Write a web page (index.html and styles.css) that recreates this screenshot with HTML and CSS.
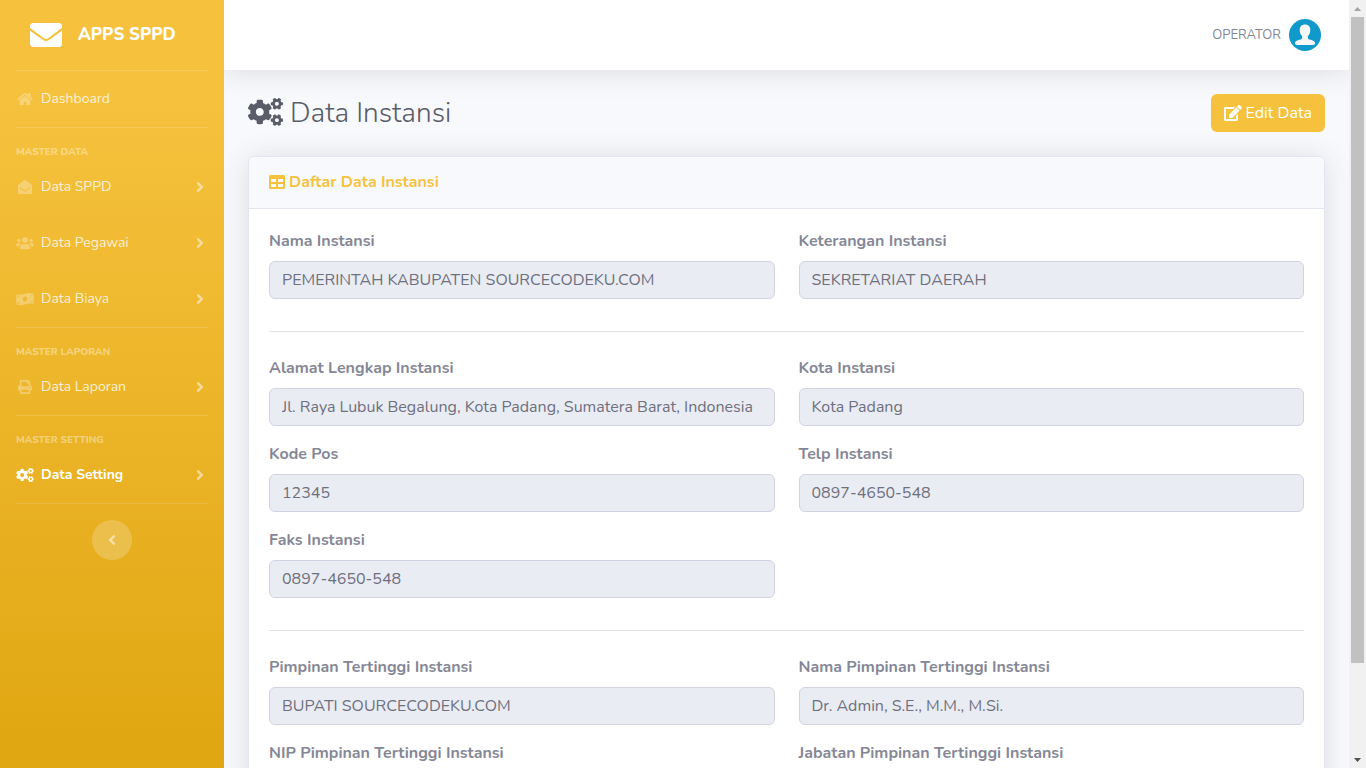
FILE: index.html
```html
<!DOCTYPE html>
<html lang="id">
<head>
<meta charset="utf-8">
<meta name="viewport" content="width=device-width, initial-scale=1">
<title>Data Instansi</title>
<link rel="stylesheet" href="styles.css">
</head>
<body>
<svg class="sprite" aria-hidden="true">
  <symbol id="envelope" viewBox="0 0 512 512"><path d="M502.3 190.8c3.9-3.1 9.7-.2 9.7 4.7V400c0 26.5-21.5 48-48 48H48c-26.5 0-48-21.5-48-48V195.6c0-5 5.7-7.8 9.7-4.7 22.4 17.4 52.1 39.5 154.1 113.6 21.1 15.4 56.7 47.8 92.2 47.6 35.7.3 72-32.8 92.3-47.6 102-74.1 131.6-96.3 154-113.7zM256 320c23.2.4 56.6-29.2 73.4-41.4 132.7-96.3 142.8-104.7 173.4-128.7 5.8-4.5 9.2-11.5 9.2-18.9v-19c0-26.5-21.5-48-48-48H48c-26.5 0-48 21.5-48 48v19c0 7.4 3.4 14.3 9.2 18.9 30.6 23.9 40.7 32.4 173.4 128.7 16.8 12.2 50.2 41.8 73.4 41.4z"/></symbol>
  <symbol id="home" viewBox="0 0 576 512"><path d="M280.37 148.26L96 300.11V464a16 16 0 0 0 16 16l112.06-.29a16 16 0 0 0 15.92-16V368a16 16 0 0 1 16-16h64a16 16 0 0 1 16 16v95.64a16 16 0 0 0 16 16.05L464 480a16 16 0 0 0 16-16V300L295.67 148.26a12.19 12.19 0 0 0-15.3 0zM571.6 251.47L488 182.56V44.05a12 12 0 0 0-12-12h-56a12 12 0 0 0-12 12v72.61L318.47 43a48 48 0 0 0-61 0L4.34 251.47a12 12 0 0 0-1.6 16.9l25.5 31A12 12 0 0 0 45.15 301l235.22-193.74a12.19 12.19 0 0 1 15.3 0L530.9 301a12 12 0 0 0 16.9-1.6l25.5-31a12 12 0 0 0-1.7-16.93z"/></symbol>
  <symbol id="envelope-open" viewBox="0 0 512 512"><path d="M512 464c0 26.51-21.49 48-48 48H48c-26.51 0-48-21.49-48-48V200.724a48 48 0 0 1 18.387-37.776c24.913-19.529 45.501-35.365 164.2-121.511C199.412 29.17 232.797-.347 256 .003c23.198-.354 56.596 29.172 73.413 41.433 118.687 86.137 139.303 101.995 164.2 121.512A48 48 0 0 1 512 200.724V464zm-65.666-196.605c-2.563-3.728-7.7-4.595-11.339-1.907-22.845 16.873-55.462 40.705-105.582 77.079-16.825 12.266-50.21 41.781-73.413 41.43-23.211.344-56.559-29.143-73.413-41.43-50.114-36.37-82.734-60.204-105.582-77.079-3.639-2.688-8.776-1.821-11.339 1.907l-9.072 13.196a7.998 7.998 0 0 0 1.839 10.967c22.887 16.899 55.454 40.69 105.303 76.868 20.274 14.781 56.524 47.813 92.264 47.573 35.724.242 71.961-32.771 92.263-47.573 49.85-36.179 82.418-59.97 105.303-76.868a7.998 7.998 0 0 0 1.839-10.967l-9.071-13.196z"/></symbol>
  <symbol id="users" viewBox="0 0 640 512"><path d="M96 224c35.3 0 64-28.7 64-64s-28.7-64-64-64-64 28.7-64 64 28.7 64 64 64zm448 0c35.3 0 64-28.7 64-64s-28.7-64-64-64-64 28.7-64 64 28.7 64 64 64zm32 32h-64c-17.6 0-33.5 7.1-45.1 18.6 40.3 22.1 68.9 62 75.1 109.4h66c17.7 0 32-14.3 32-32v-32c0-35.3-28.7-64-64-64zm-256 0c61.9 0 112-50.1 112-112S381.9 32 320 32 208 82.1 208 144s50.1 112 112 112zm76.8 32h-8.3c-20.8 10-43.9 16-68.5 16s-47.6-6-68.5-16h-8.3C179.6 288 128 339.6 128 403.2V432c0 26.5 21.5 48 48 48h288c26.5 0 48-21.5 48-48v-28.8c0-63.6-51.6-115.2-115.2-115.2zm-223.7-13.4C161.5 263.1 145.6 256 128 256H64c-35.3 0-64 28.7-64 64v32c0 17.7 14.3 32 32 32h65.9c6.3-47.4 34.9-87.3 75.2-109.4z"/></symbol>
  <symbol id="money" viewBox="0 0 640 512"><path d="M621.16 54.46C582.37 38.19 543.55 32 504.75 32c-123.17-.01-246.33 62.34-369.5 62.34-30.89 0-61.76-3.92-92.65-13.72-3.47-1.1-6.95-1.62-10.35-1.62C15.04 79 0 92.32 0 110.81v317.26c0 12.63 7.23 24.6 18.84 29.46C57.63 473.81 96.45 480 135.25 480c123.17 0 246.34-62.35 369.51-62.35 30.89 0 61.76 3.92 92.65 13.72 3.47 1.1 6.95 1.62 10.35 1.62 17.21 0 32.25-13.32 32.25-31.81V83.93c-.01-12.64-7.24-24.6-18.85-29.47zM48 132.22c20.12 5.04 41.12 7.57 62.72 8.93C104.84 170.54 79 192.69 48 192.69v-60.47zm0 285v-47.78c34.37 0 62.18 27.27 63.71 61.4-22.53-1.81-43.59-6.31-63.71-13.62zM320 352c-44.19 0-80-42.99-80-96 0-53.02 35.82-96 80-96s80 42.98 80 96c0 53.03-35.83 96-80 96zm272 27.78c-17.52-4.39-35.71-6.85-54.32-8.44 5.87-26.08 27.5-45.88 54.32-49.28v57.72zm0-236.11c-30.89-3.91-54.86-29.7-55.81-61.55 19.54 2.17 38.09 6.23 55.81 12.66v48.89z"/></symbol>
  <symbol id="print" viewBox="0 0 512 512"><path d="M448 192V77.25c0-8.49-3.37-16.62-9.37-22.63L393.37 9.37c-6-6-14.14-9.37-22.63-9.37H96C78.33 0 64 14.33 64 32v160c-35.35 0-64 28.65-64 64v112c0 8.84 7.16 16 16 16h48v96c0 17.67 14.33 32 32 32h320c17.67 0 32-14.33 32-32v-96h48c8.84 0 16-7.16 16-16V256c0-35.35-28.65-64-64-64zm-64 256H128v-96h256v96zm0-224H128V64h192v48c0 8.84 7.16 16 16 16h48v96zm48 72c-13.25 0-24-10.75-24-24 0-13.26 10.75-24 24-24s24 10.74 24 24c0 13.25-10.75 24-24 24z"/></symbol>
  <symbol id="cogs" viewBox="0 0 640 512"><path d="M512.1 191l-8.2 14.3c-3 5.3-9.4 7.5-15.1 5.4-11.8-4.4-22.6-10.7-32.1-18.6-4.6-3.8-5.8-10.5-2.8-15.7l8.2-14.3c-6.9-8-12.3-17.3-15.9-27.4h-16.5c-6 0-11.2-4.3-12.2-10.3-2-12-2.1-24.6 0-37.1 1-6 6.2-10.4 12.2-10.4h16.5c3.6-10.1 9-19.4 15.9-27.4l-8.2-14.3c-3-5.2-1.9-11.9 2.8-15.7 9.5-7.9 20.4-14.2 32.1-18.6 5.7-2.1 12.1.1 15.1 5.4l8.2 14.3c10.5-1.9 21.2-1.9 31.7 0L552 6.3c3-5.3 9.4-7.5 15.1-5.4 11.8 4.4 22.6 10.7 32.1 18.6 4.6 3.8 5.8 10.5 2.8 15.7l-8.2 14.3c6.9 8 12.3 17.3 15.9 27.4h16.5c6 0 11.2 4.3 12.2 10.3 2 12 2.1 24.6 0 37.1-1 6-6.2 10.4-12.2 10.4h-16.5c-3.6 10.1-9 19.4-15.9 27.4l8.2 14.3c3 5.2 1.9 11.9-2.8 15.7-9.5 7.9-20.4 14.2-32.1 18.6-5.7 2.1-12.1-.1-15.1-5.4l-8.2-14.3c-10.4 1.9-21.2 1.9-31.7 0zm-10.5-58.8c38.5 29.6 82.4-14.3 52.8-52.8-38.5-29.7-82.4 14.3-52.8 52.8zM386.3 286.1l33.7 16.8c10.1 5.8 14.5 18.1 10.5 29.1-8.9 24.2-26.4 46.4-42.6 65.8-7.4 8.9-20.2 11.1-30.3 5.3l-29.1-16.8c-16 13.7-34.6 24.6-54.9 31.7v33.6c0 11.6-8.3 21.6-19.7 23.6-24.6 4.2-50.4 4.4-75.9 0-11.5-2-20-11.9-20-23.6V418c-20.3-7.2-38.9-18-54.9-31.7L74 403c-10 5.8-22.9 3.6-30.3-5.3-16.2-19.4-33.3-41.6-42.2-65.7-4-10.9.4-23.2 10.5-29.1l33.3-16.8c-3.9-20.9-3.9-42.4 0-63.4L12 205.8c-10.1-5.8-14.6-18.1-10.5-29 8.9-24.2 26-46.4 42.2-65.8 7.4-8.9 20.2-11.1 30.3-5.3l29.1 16.8c16-13.7 34.6-24.6 54.9-31.7V57.1c0-11.5 8.2-21.5 19.6-23.5 24.6-4.2 50.5-4.4 76-.1 11.5 2 20 11.9 20 23.6v33.6c20.3 7.2 38.9 18 54.9 31.7l29.1-16.8c10-5.8 22.9-3.6 30.3 5.3 16.2 19.4 33.2 41.6 42.1 65.8 4 10.9.1 23.2-10 29.1l-33.7 16.8c3.9 21 3.9 42.5 0 63.5zm-117.6 21.1c59.2-77-28.7-164.9-105.7-105.7-59.2 77 28.7 164.9 105.7 105.7zm243.4 182.7l-8.2 14.3c-3 5.3-9.4 7.5-15.1 5.4-11.8-4.4-22.6-10.7-32.1-18.6-4.6-3.8-5.8-10.5-2.8-15.7l8.2-14.3c-6.9-8-12.3-17.3-15.9-27.4h-16.5c-6 0-11.2-4.3-12.2-10.3-2-12-2.1-24.6 0-37.1 1-6 6.2-10.4 12.2-10.4h16.5c3.6-10.1 9-19.4 15.9-27.4l-8.2-14.3c-3-5.2-1.9-11.9 2.8-15.7 9.5-7.9 20.4-14.2 32.1-18.6 5.7-2.1 12.1.1 15.1 5.4l8.2 14.3c10.5-1.9 21.2-1.9 31.7 0l8.2-14.3c3-5.3 9.4-7.5 15.1-5.4 11.8 4.4 22.6 10.7 32.1 18.6 4.6 3.8 5.8 10.5 2.8 15.7l-8.2 14.3c6.9 8 12.3 17.3 15.9 27.4h16.5c6 0 11.2 4.3 12.2 10.3 2 12 2.1 24.6 0 37.1-1 6-6.2 10.4-12.2 10.4h-16.5c-3.6 10.1-9 19.4-15.9 27.4l8.2 14.3c3 5.2 1.9 11.9-2.8 15.7-9.5 7.9-20.4 14.2-32.1 18.6-5.7 2.1-12.1-.1-15.1-5.4l-8.2-14.3c-10.4 1.9-21.2 1.9-31.7 0zM501.6 431c38.5 29.6 82.4-14.3 52.8-52.8-38.5-29.6-82.4 14.3-52.8 52.8z"/></symbol>
  <symbol id="angle" viewBox="0 0 256 512"><path d="M224.3 273l-136 136c-9.4 9.4-24.6 9.4-33.9 0l-22.6-22.6c-9.4-9.4-9.4-24.6 0-33.9l96.4-96.4-96.4-96.4c-9.4-9.4-9.4-24.6 0-33.9L54.3 103c9.4-9.4 24.6-9.4 33.9 0l136 136c9.5 9.4 9.5 24.6.1 34z"/></symbol>
  <symbol id="edit" viewBox="0 0 576 512"><path d="M402.6 83.2l90.2 90.2c3.8 3.8 3.8 10 0 13.8L274.4 405.6l-92.8 10.3c-12.4 1.4-22.9-9.1-21.5-21.5l10.3-92.8L388.8 83.2c3.8-3.8 10-3.8 13.8 0zm162-22.9l-48.8-48.8c-15.2-15.2-39.9-15.2-55.2 0l-35.4 35.4c-3.8 3.8-3.8 10 0 13.8l90.2 90.2c3.8 3.8 10 3.8 13.8 0l35.4-35.4c15.2-15.3 15.2-40 0-55.2zM384 346.2V448H64V128h229.8c3.2 0 6.2-1.3 8.5-3.5l40-40c7.6-7.6 2.2-20.5-8.5-20.5H48C21.5 64 0 85.5 0 112v352c0 26.5 21.5 48 48 48h352c26.5 0 48-21.5 48-48V306.2c0-10.7-12.9-16-20.5-8.5l-40 40c-2.2 2.3-3.5 5.3-3.5 8.5z"/></symbol>
  <symbol id="table" viewBox="0 0 512 512"><path d="M464 32H48C21.49 32 0 53.49 0 80v352c0 26.51 21.49 48 48 48h416c26.51 0 48-21.49 48-48V80c0-26.51-21.49-48-48-48zM224 416H64v-96h160v96zm0-160H64v-96h160v96zm224 160H288v-96h160v96zm0-160H288v-96h160v96z"/></symbol>
</svg>
<div class="window">
  <div class="page">
    <aside class="sidebar">
      <a class="brand" href="#"><svg class="brand-icon"><use href="#envelope"/></svg><span>APPS SPPD</span></a>
      <nav class="menu">
        <hr class="divider">
        <a class="item" href="#"><svg class="item-icon"><use href="#home"/></svg><span>Dashboard</span></a>
        <hr class="divider">
        <h2 class="group">MASTER DATA</h2>
        <a class="item" href="#"><svg class="item-icon"><use href="#envelope-open"/></svg><span>Data SPPD</span><svg class="arrow"><use href="#angle"/></svg></a>
        <a class="item" href="#"><svg class="item-icon"><use href="#users"/></svg><span>Data Pegawai</span><svg class="arrow"><use href="#angle"/></svg></a>
        <a class="item" href="#"><svg class="item-icon"><use href="#money"/></svg><span>Data Biaya</span><svg class="arrow"><use href="#angle"/></svg></a>
        <hr class="divider">
        <h2 class="group">MASTER LAPORAN</h2>
        <a class="item" href="#"><svg class="item-icon"><use href="#print"/></svg><span>Data Laporan</span><svg class="arrow"><use href="#angle"/></svg></a>
        <hr class="divider">
        <h2 class="group">MASTER SETTING</h2>
        <a class="item active" href="#"><svg class="item-icon"><use href="#cogs"/></svg><span>Data Setting</span><svg class="arrow"><use href="#angle"/></svg></a>
        <hr class="divider">
      </nav>
      <button class="toggle" type="button" aria-label="Toggle sidebar"><svg class="toggle-icon"><use href="#angle"/></svg></button>
    </aside>
    <div class="content">
      <header class="topbar">
        <a class="user" href="#"><span>OPERATOR</span>
          <svg class="avatar" viewBox="0 0 32 32"><circle cx="16" cy="16" r="16" fill="#0f9acb"/><path fill="#f7f7f7" d="M16 5.500c3.400 0 5.300 2.200 5.300 5.500 0 2.600-.9 4.800-2.400 6.100v1.800c0 1 .7 1.300 2 1.700 3.300.9 5.200 1.800 5.200 3.700 0 1.200-.9 1.700-2.300 1.700H8.200c-1.400 0-2.300-.5-2.300-1.700 0-1.900 1.900-2.800 5.200-3.700 1.300-.4 2-.7 2-1.700v-1.800c-1.500-1.300-2.400-3.500-2.400-6.100 0-3.300 1.900-5.500 5.300-5.500z"/></svg>
        </a>
      </header>
      <main class="main">
        <div class="heading">
          <h1 class="title"><svg class="title-icon"><use href="#cogs"/></svg><span>Data Instansi</span></h1>
          <button class="edit" type="button"><svg class="edit-icon"><use href="#edit"/></svg><span>Edit Data</span></button>
        </div>
        <section class="card">
          <h2 class="card-header"><svg class="table-icon"><use href="#table"/></svg><span>Daftar Data Instansi</span></h2>
          <form class="card-body">
            <div class="fields">
              <div class="field"><label for="nama">Nama Instansi</label><input id="nama" readonly value="PEMERINTAH KABUPATEN SOURCECODEKU.COM"></div>
              <div class="field"><label for="ket">Keterangan Instansi</label><input id="ket" readonly value="SEKRETARIAT DAERAH"></div>
            </div>
            <hr class="rule">
            <div class="fields">
              <div class="field"><label for="alamat">Alamat Lengkap Instansi</label><input id="alamat" readonly value="Jl. Raya Lubuk Begalung, Kota Padang, Sumatera Barat, Indonesia"></div>
              <div class="field"><label for="kota">Kota Instansi</label><input id="kota" readonly value="Kota Padang"></div>
              <div class="field"><label for="pos">Kode Pos</label><input id="pos" readonly value="12345"></div>
              <div class="field"><label for="telp">Telp Instansi</label><input id="telp" readonly value="0897-4650-548"></div>
              <div class="field"><label for="faks">Faks Instansi</label><input id="faks" readonly value="0897-4650-548"></div>
            </div>
            <hr class="rule">
            <div class="fields">
              <div class="field"><label for="pimpinan">Pimpinan Tertinggi Instansi</label><input id="pimpinan" readonly value="BUPATI SOURCECODEKU.COM"></div>
              <div class="field"><label for="nama-pimpinan">Nama Pimpinan Tertinggi Instansi</label><input id="nama-pimpinan" readonly value="Dr. Admin, S.E., M.M., M.Si."></div>
              <div class="field"><label for="nip">NIP Pimpinan Tertinggi Instansi</label><input id="nip" readonly></div>
              <div class="field"><label for="jabatan">Jabatan Pimpinan Tertinggi Instansi</label><input id="jabatan" readonly></div>
            </div>
          </form>
        </section>
      </main>
    </div>
  </div>
  <div class="scrollbar" aria-hidden="true">
    <svg class="scroll-arrow" viewBox="0 0 17 17"><path fill="#a3a3a3" d="M5 11h7L8.500 7z"/></svg>
    <div class="track"><div class="thumb"></div></div>
    <svg class="scroll-arrow" viewBox="0 0 17 17"><path fill="#505050" d="M5 7h7l-3.500 4z"/></svg>
  </div>
</div>
</body>
</html>
```
FILE: styles.css
```css
* { box-sizing: border-box; }

body {
  margin: 0;
  font-family: Nunito, "Open Sans", "Noto Sans", sans-serif;
  font-size: 16px;
  line-height: 24px;
  color: #858796;
  background: #f8f9fc;
}

svg { fill: currentColor; flex: none; }
a { color: inherit; text-decoration: none; }
h1, h2 { margin: 0; }
button, input { font: inherit; }
.sprite { display: none; }

.window { display: flex; height: 100vh; overflow: hidden; }
.page { flex: 1; display: flex; align-items: flex-start; min-width: 0; overflow-y: auto; scrollbar-width: none; }

/* Sidebar */
.sidebar {
  flex: none;
  align-self: stretch;
  display: flex;
  flex-direction: column;
  width: 224px;
  height: max-content;
  min-height: 872px;
  color: #fff;
  background: linear-gradient(180deg, #f6c23e 10%, #dda20a 100%);
}
.brand {
  display: flex;
  align-items: center;
  gap: 16px;
  height: 70px;
  padding-left: 30px;
  font-size: 17px;
  font-weight: 800;
}
.brand-icon { width: 32px; height: 32px; }
.menu { display: flex; flex-direction: column; }
.divider { width: calc(100% - 32px); height: 1px; margin: 0 16px; border: 0; background: rgba(255, 255, 255, .15); }
.group {
  margin: 18px 16px 0;
  font-size: 10px;
  font-weight: 800;
  line-height: 13px;
  color: rgba(255, 255, 255, .4);
}
.item {
  display: flex;
  align-items: center;
  gap: 7px;
  height: 56px;
  padding: 0 16px;
  font-size: 14px;
  color: rgba(255, 255, 255, .8);
}
.item-icon { width: 18px; height: 14px; color: rgba(255, 255, 255, .3); }
.arrow { width: 8px; height: 16px; margin-left: auto; margin-right: 4px; color: rgba(255, 255, 255, .5); }
.active { font-weight: 700; color: #fff; }
.active .item-icon { color: #fff; }
.toggle {
  display: flex;
  align-items: center;
  justify-content: center;
  align-self: center;
  width: 40px;
  height: 40px;
  margin-top: 16px;
  padding: 0;
  border: 0;
  border-radius: 50%;
  color: rgba(255, 255, 255, .5);
  background: rgba(255, 255, 255, .2);
}
.toggle-icon { width: 8px; height: 16px; transform: scaleX(-1); }

/* Content */
.content { flex: 1; min-width: 0; overflow: hidden; }
.topbar {
  display: flex;
  align-items: center;
  justify-content: flex-end;
  height: 70px;
  padding-right: 28px;
  background: #fff;
  box-shadow: 0 2px 28px rgba(58, 59, 69, .15);
}
.user { display: flex; align-items: center; gap: 8px; font-size: 13px; }
.avatar { width: 32px; height: 32px; }
.main { padding: 24px; }
.heading { display: flex; align-items: center; justify-content: space-between; margin-bottom: 24px; }
.title {
  display: flex;
  align-items: center;
  gap: 7px;
  font-size: 28px;
  font-weight: 300;
  line-height: 34px;
  color: #5a5c69;
}
.title-icon { width: 35px; height: 28px; margin-bottom: 2px; }
.edit {
  display: flex;
  align-items: center;
  gap: 4px;
  height: 38px;
  padding: 0 13px;
  border: 0;
  border-radius: 6px;
  color: #fff;
  background: #f6c23e;
}
.edit-icon { width: 18px; height: 16px; }

.card {
  border: 1px solid #e3e6f0;
  border-radius: 6px;
  background: #fff;
  box-shadow: 0 2px 28px rgba(58, 59, 69, .15);
}
.card-header {
  display: flex;
  align-items: center;
  gap: 4px;
  height: 52px;
  padding: 0 20px 2px;
  border-bottom: 1px solid #e3e6f0;
  border-radius: 6px 6px 0 0;
  font-size: 16px;
  color: #f6c23e;
  background: #f8f9fc;
}
.table-icon { width: 16px; height: 16px; }
.card-body { padding: 20px; }
.fields { display: grid; grid-template-columns: 1fr 1fr; gap: 16px 24px; }
.field { display: flex; flex-direction: column; gap: 8px; min-width: 0; }
.field label { font-weight: 700; }
.field input {
  width: 100%;
  height: 38px;
  padding: 0 12px;
  border: 1px solid #d1d3e2;
  border-radius: 6px;
  outline: 0;
  color: #6e707e;
  background: #eaecf4;
}
.rule { height: 1px; margin: 32px 0 24px; border: 0; background: #e3e3e6; }

/* Scrollbar */
.scrollbar { flex: none; display: flex; flex-direction: column; width: 17px; background: #f1f1f1; }
.scroll-arrow { width: 17px; height: 17px; }
.track { flex: 1; padding: 0 2px; }
.thumb { height: 88%; background: #c1c1c1; }
```
